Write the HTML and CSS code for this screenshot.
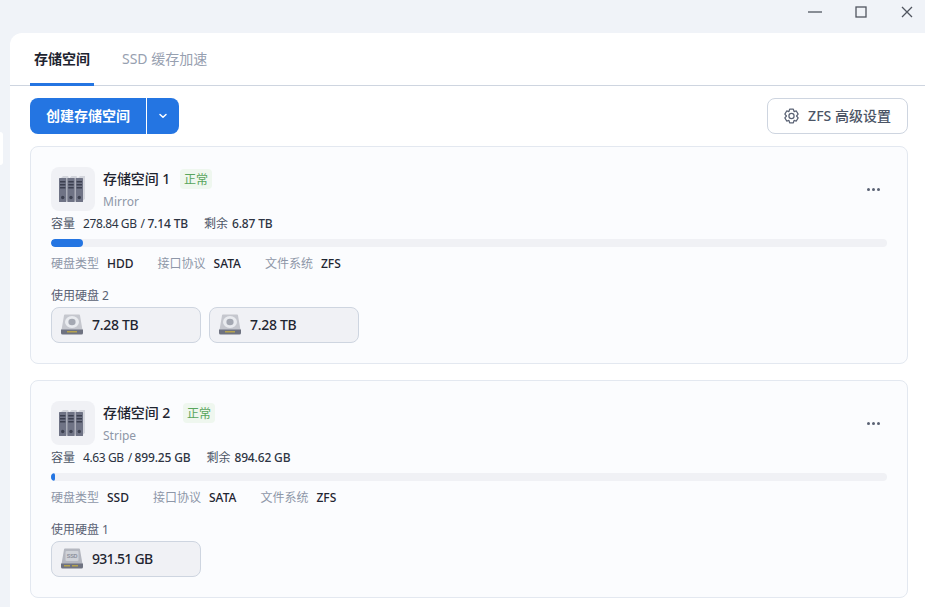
FILE: index.html
```html
<!DOCTYPE html>
<html lang="zh-CN">
<head>
<meta charset="utf-8">
<title>存储空间</title>
<link rel="stylesheet" href="styles.css">
</head>
<body>
<svg class="defs" width="0" height="0" aria-hidden="true">
  <defs>
    <symbol id="pool" viewBox="0 0 32 32">
      <path d="M4 5l2-2h5l1 2h.5l2-2h5l1 2h.5l2-2h5v23l-2 1.500H4z" fill="#d3d5dc"/>
      <g fill="#6f7385">
        <rect x="2" y="5" width="7.400" height="24" rx=".5"/>
        <rect x="10.300" y="5" width="7.400" height="24" rx=".5"/>
        <rect x="18.600" y="5" width="7.400" height="24" rx=".5"/>
      </g>
      <g fill="#3c4050">
        <path d="M3 8h5.400v1.400H3zM3 11h5.400v1.400H3zM3 14h5.400v1.400H3zM11.300 8h5.400v1.400h-5.400zM11.300 11h5.400v1.400h-5.400zM11.300 14h5.400v1.400h-5.400zM19.600 8H25v1.400h-5.400zM19.600 11H25v1.400h-5.400zM19.600 14H25v1.400h-5.400z"/>
        <circle cx="5.700" cy="24.500" r="1.700"/><circle cx="14" cy="24.500" r="1.700"/><circle cx="22.300" cy="24.500" r="1.700"/>
      </g>
    </symbol>
    <symbol id="hdd" viewBox="0 0 24 22">
      <path d="M4 1.500Q4 .5 5 .5h14q1 0 1 1L22.500 16h-21z" fill="#c5c7ce"/>
      <ellipse cx="12" cy="8" rx="7" ry="6" fill="#e9ebef"/>
      <ellipse cx="12" cy="8" rx="3.600" ry="3.200" fill="#a4a8b2"/>
      <path d="M1 15.500h22V19q0 1.500-1.500 1.500h-19Q1 20.500 1 19z" fill="#6e7280"/>
      <path d="M7 17h10v1.500H7z" fill="#b5a24e"/>
    </symbol>
    <symbol id="ssd" viewBox="0 0 24 22">
      <path d="M4 1.500Q4 .5 5 .5h14q1 0 1 1L22.500 16h-21z" fill="#b4b7c0"/>
      <rect x="5.500" y="3" width="13" height="10" rx="1" fill="#cfd2d8"/>
      <text x="12" y="10.300" class="ssd-label">SSD</text>
      <path d="M1 15.500h22V19q0 1.500-1.500 1.500h-19Q1 20.500 1 19z" fill="#6e7280"/>
      <path d="M4 17h6v1.500H4zM12 17h6v1.500h-6z" fill="#b5a24e"/>
    </symbol>
  </defs>
</svg>

<header class="titlebar">
  <button class="win-btn" aria-label="最小化"><svg width="14" height="14" viewBox="0 0 14 14"><path d="M0 7h14" class="win-stroke"/></svg></button>
  <button class="win-btn" aria-label="最大化"><svg width="14" height="14" viewBox="0 0 14 14"><rect x="2" y="2" width="10" height="10" class="win-stroke"/></svg></button>
  <button class="win-btn" aria-label="关闭"><svg width="14" height="14" viewBox="0 0 14 14"><path d="M2 2l10 10M12 2L2 12" class="win-stroke"/></svg></button>
</header>

<div class="sliver"></div>

<main class="panel">
  <nav class="tabs">
    <a class="tab tab-active">存储空间</a>
    <a class="tab">SSD 缓存加速</a>
  </nav>

  <div class="toolbar">
    <div class="split-btn">
      <button class="split-main">创建存储空间</button>
      <button class="split-arrow" aria-label="更多"><svg width="10" height="6" viewBox="0 0 10 6"><path d="M2 1.500L5 4.300 8 1.500" fill="none" stroke="#fff" stroke-width="1.500" stroke-linecap="round" stroke-linejoin="round"/></svg></button>
    </div>
    <button class="ghost-btn">
      <svg width="15" height="16" viewBox="2 0.500 12 13" fill="none" stroke="#5a6274" stroke-width="1" stroke-linejoin="round"><path d="M6.500 1.500h3l.6 1.900 1.800-.5 1.500 2.600-1.300 1.500 1.300 1.500-1.500 2.600-1.800-.5-.6 1.900h-3l-.6-1.900-1.800.5-1.500-2.600L3.900 7 2.600 5.500l1.500-2.600 1.800.5z"/><circle cx="8" cy="7" r="2.100"/></svg>
      <span>ZFS 高级设置</span>
    </button>
  </div>

  <section class="card">
    <div class="card-head">
      <div class="pool-icon"><svg width="32" height="32"><use href="#pool"/></svg></div>
      <div class="pool-titles">
        <div class="pool-name-row"><span class="pool-name">存储空间 1</span><span class="badge">正常</span></div>
        <div class="pool-type">Mirror</div>
      </div>
      <button class="more" aria-label="更多">
        <i></i><i></i><i></i>
      </button>
    </div>
    <div class="capacity"><span class="cap-label">容量</span><span class="cap-num">278.84 GB</span><span class="cap-num cap-slash">/ <b>7.14 TB</b></span><span class="cap-label cap-rest">剩余</span><span class="cap-num cap-strong">6.87 TB</span></div>
    <div class="bar"><div class="bar-fill" style="width:3.800%"></div></div>
    <div class="props">
      <span class="prop"><span class="prop-k">硬盘类型</span><span class="prop-v">HDD</span></span>
      <span class="prop"><span class="prop-k">接口协议</span><span class="prop-v">SATA</span></span>
      <span class="prop"><span class="prop-k">文件系统</span><span class="prop-v">ZFS</span></span>
    </div>
    <div class="used">使用硬盘 2</div>
    <div class="disks">
      <div class="disk"><svg width="24" height="22"><use href="#hdd"/></svg><span>7.28 TB</span></div>
      <div class="disk"><svg width="24" height="22"><use href="#hdd"/></svg><span>7.28 TB</span></div>
    </div>
  </section>

  <section class="card">
    <div class="card-head">
      <div class="pool-icon"><svg width="32" height="32"><use href="#pool"/></svg></div>
      <div class="pool-titles">
        <div class="pool-name-row"><span class="pool-name">存储空间 2</span><span class="badge">正常</span></div>
        <div class="pool-type">Stripe</div>
      </div>
      <button class="more" aria-label="更多">
        <i></i><i></i><i></i>
      </button>
    </div>
    <div class="capacity"><span class="cap-label">容量</span><span class="cap-num">4.63 GB</span><span class="cap-num cap-slash">/ <b>899.25 GB</b></span><span class="cap-label cap-rest">剩余</span><span class="cap-num cap-strong">894.62 GB</span></div>
    <div class="bar"><div class="bar-fill" style="width:0.500%"></div></div>
    <div class="props">
      <span class="prop"><span class="prop-k">硬盘类型</span><span class="prop-v">SSD</span></span>
      <span class="prop"><span class="prop-k">接口协议</span><span class="prop-v">SATA</span></span>
      <span class="prop"><span class="prop-k">文件系统</span><span class="prop-v">ZFS</span></span>
    </div>
    <div class="used">使用硬盘 1</div>
    <div class="disks">
      <div class="disk"><svg width="24" height="22"><use href="#ssd"/></svg><span class="disk-wide">931.51 GB</span></div>
    </div>
  </section>
</main>
</body>
</html>
```

FILE: styles.css
```css
* { box-sizing: border-box; }
html, body { height: 100%; }
body {
  margin: 0;
  background: #f0f3f8;
  font-family: "Noto Sans", "Noto Sans CJK SC", sans-serif;
  color: #1f2531;
  overflow: hidden;
  position: relative;
}
button { font: inherit; border: 0; padding: 0; background: none; }
.defs { position: absolute; }
.ssd-label { font: 700 5.500px "Liberation Sans", sans-serif; fill: #8c909c; text-anchor: middle; }

.titlebar { height: 33px; display: flex; justify-content: flex-end; margin-right: -5px; }
.win-btn { width: 46px; height: 23px; display: flex; align-items: center; justify-content: center; }
.win-stroke { fill: none; stroke: #50555f; stroke-width: 1.300; }

.sliver { position: absolute; left: 0; top: 132px; width: 3px; height: 33px; background: #fff; border-radius: 0 3px 3px 0; }

.panel { margin-left: 10px; height: 574px; background: #fff; border-radius: 12px 0 0 0; padding: 0 17px 0 20px; }

.tabs { height: 53px; margin: 0 -17px 0 -20px; padding-left: 20px; border-bottom: 1px solid #ced5e0; display: flex; }
.tab { width: 64px; height: 53px; line-height: 52px; text-align: center; font-size: 14px; font-weight: 700; color: #1f2531; white-space: nowrap; }
.tab + .tab { width: auto; margin-left: 28px; font-weight: 400; font-size: 14px; color: #97a0b0; }
.tab-active { border-bottom: 3px solid #2475e2; }

.toolbar { display: flex; justify-content: space-between; margin-top: 12px; height: 36px; }
.split-btn { display: flex; height: 36px; border-radius: 8px; overflow: hidden; }
.split-main { width: 116px; padding-bottom: 2px; background: #2475e2; color: #fff; font-size: 14px; font-weight: 700; }
.split-arrow { width: 32px; margin-left: 1px; background: #2475e2; display: flex; align-items: center; justify-content: center; }
.ghost-btn { width: 141px; height: 36px; padding-bottom: 1px; border: 1px solid #ced5e0; border-radius: 8px; background: #fff; color: #4c5566; font-size: 14px; font-weight: 500; display: flex; align-items: center; justify-content: center; gap: 9px; }
.ghost-btn span { margin-bottom: 1px; }

.card { margin-top: 12px; height: 218px; background: #fbfcfe; border: 1px solid #e3e8f0; border-radius: 8px; padding: 20px 20px 0; }
.card + .card { margin-top: 16px; }
.card + .card .badge { margin-left: 3px; }
.card-head { display: flex; height: 44px; }
.pool-icon { width: 44px; height: 44px; background: #f0f1f5; border-radius: 8px; display: flex; align-items: center; justify-content: center; }
.pool-titles { margin-left: 8px; flex: 1; }
.pool-name-row { display: flex; align-items: center; height: 24px; gap: 10px; }
.pool-name { font-size: 14px; font-weight: 500; color: #1f2531; margin-top: -2px; letter-spacing: -.1px; }
.badge { height: 20px; line-height: 21px; padding: 0 4px; font-size: 12px; color: #58a55c; background: #eff7ef; border-radius: 4px; }
.pool-type { font-size: 12px; line-height: 20px; color: #8e97a8; margin-top: 1px; }
.more { width: 14px; height: 44px; margin-right: 7px; display: flex; align-items: center; justify-content: center; gap: 2px; }
.more i { width: 3px; height: 3px; border-radius: 50%; background: #5a6274; }

.capacity { display: flex; font-size: 12px; line-height: 16px; margin-top: 5px; color: #2d3443; gap: 8px; }
.cap-label { color: #4c5566; }
.cap-num { letter-spacing: -.4px; }
.cap-slash { margin-left: -4px; }
.cap-slash b { font-weight: 500; letter-spacing: -.15px; }
.cap-rest { margin-left: 8px; }
.cap-rest + .cap-num { margin-left: -4px; }
.cap-strong { font-weight: 500; letter-spacing: -.15px; }

.bar { height: 8px; margin-top: 7px; border-radius: 4px; background: #f0f1f5; overflow: hidden; }
.bar-fill { height: 100%; min-width: 4px; border-radius: 4px; background: #2475e2; }

.props { display: flex; gap: 24px; margin-top: 8px; font-size: 12px; line-height: 18px; }
.prop { display: flex; gap: 8px; }
.prop-k { color: #8e97a8; }
.prop-v { color: #1f2531; font-weight: 500; }

.used { margin-top: 15px; font-size: 12px; line-height: 16px; color: #5a6274; }
.disks { display: flex; gap: 8px; margin-top: 3px; }
.disk { width: 150px; height: 36px; display: flex; align-items: center; gap: 8px; padding-left: 8px; background: #f0f1f5; border: 1px solid #ced5e0; border-radius: 8px; font-size: 14px; font-weight: 500; color: #1f2531; letter-spacing: -.3px; }
.disk span { margin-bottom: 2px; }
.disk-wide { letter-spacing: -.7px; }
```
